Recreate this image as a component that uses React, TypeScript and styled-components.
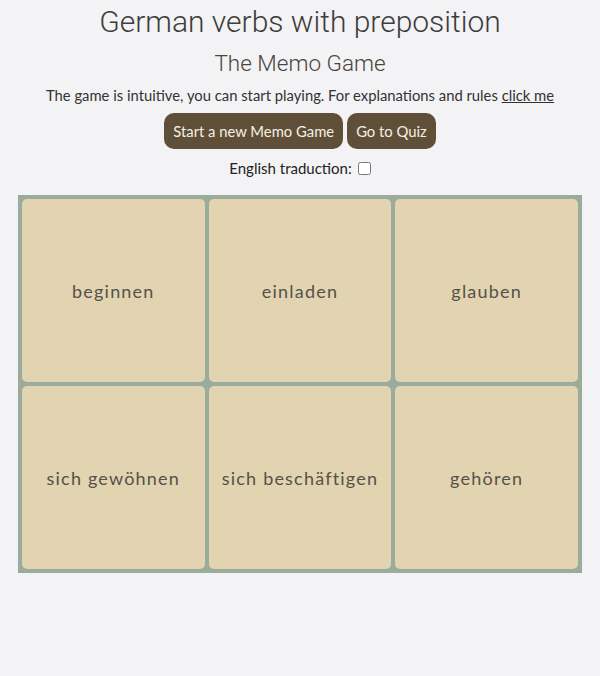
import React from "react";
import styled, { createGlobalStyle } from "styled-components";

const Global = createGlobalStyle`
  html, body { margin: 0; padding: 0; background: #f3f2f4; }
  body { font-family: Lato, "Liberation Sans", sans-serif; color: #333; }
`;

const Page = styled.div`
  display: flex;
  flex-direction: column;
  align-items: center;
  padding-top: 4px;
`;

const Title = styled.h1`
  margin: 0;
  font-family: Roboto, sans-serif;
  font-weight: 300;
  font-size: 30px;
  line-height: 36px;
  color: #3d3d3d;
`;

const Subtitle = styled.h2`
  margin: 9px 0 0;
  font-family: Roboto, sans-serif;
  font-weight: 300;
  font-size: 22.5px;
  line-height: 28px;
  color: #4a4540;
`;

const Intro = styled.p`
  margin: 8px 0 0;
  font-size: 14.8px;
  line-height: 20px;
  color: #333;
`;

const Link = styled.a`
  color: #333;
  text-decoration: underline;
  cursor: pointer;
`;

const Buttons = styled.div`
  display: flex;
  gap: 4px;
  margin-top: 8px;
`;

const Button = styled.button`
  height: 36px;
  padding: 0 9px;
  border: none;
  border-radius: 10px;
  background: #5f4f38;
  color: #f6f0e4;
  font-family: Lato, sans-serif;
  font-size: 14.8px;
  cursor: pointer;
`;

const Toggle = styled.label`
  display: flex;
  align-items: center;
  gap: 6px;
  margin-top: 9px;
  font-size: 15px;
  line-height: 20px;
  color: #222;
`;

const Check = styled.input`
  margin: 0;
  width: 13px;
  height: 13px;
`;

const Board = styled.div`
  margin-top: 17px;
  width: 564px;
  box-sizing: border-box;
  padding: 2px;
  background: #9bab9c;
  display: grid;
  grid-template-columns: repeat(3, 1fr);
`;

const Card = styled.div`
  margin: 2px;
  height: 183px;
  border-radius: 5px;
  background: #e2d4b0;
  display: flex;
  align-items: center;
  justify-content: center;
  font-family: Lato, sans-serif;
  font-size: 18px;
  letter-spacing: 1.2px;
  color: #55514a;
`;

const words = [
  "beginnen",
  "einladen",
  "glauben",
  "sich gewöhnen",
  "sich beschäftigen",
  "gehören",
];

export default function App() {
  return (
    <>
      <Global />
      <Page>
        <Title>German verbs with preposition</Title>
        <Subtitle>The Memo Game</Subtitle>
        <Intro>
          The game is intuitive, you can start playing. For explanations and rules{" "}
          <Link>click me</Link>
        </Intro>
        <Buttons>
          <Button>Start a new Memo Game</Button>
          <Button>Go to Quiz</Button>
        </Buttons>
        <Toggle>
          English traduction: <Check type="checkbox" />
        </Toggle>
        <Board>
          {words.map((w) => (
            <Card key={w}>{w}</Card>
          ))}
        </Board>
      </Page>
    </>
  );
}
